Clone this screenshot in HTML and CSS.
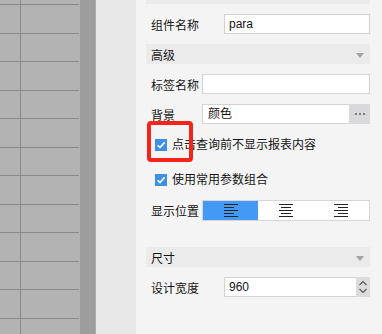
FILE: index.html
```html
<!DOCTYPE html>
<html>
<head>
<meta charset="utf-8">
<link rel="stylesheet" href="styles.css">
</head>
<body>
<div class="app">
  <div class="grid">
    <div class="grow first"><div class="c1"></div><div class="c2"></div></div>
    <div class="grow a"><div class="c1"></div><div class="c2"></div></div>
    <div class="grow b"><div class="c1"></div><div class="c2"></div></div>
    <div class="grow a"><div class="c1"></div><div class="c2"></div></div>
    <div class="grow b"><div class="c1"></div><div class="c2"></div></div>
    <div class="grow a"><div class="c1"></div><div class="c2"></div></div>
    <div class="grow b"><div class="c1"></div><div class="c2"></div></div>
    <div class="grow a"><div class="c1"></div><div class="c2"></div></div>
    <div class="grow b"><div class="c1"></div><div class="c2"></div></div>
    <div class="grow a"><div class="c1"></div><div class="c2"></div></div>
    <div class="grow b"><div class="c1"></div><div class="c2"></div></div>
    <div class="grow a"><div class="c1"></div><div class="c2"></div></div>
    <div class="grow a"><div class="c1"></div><div class="c2"></div></div>
  </div>
  <div class="scroll"></div>
  <div class="strip"></div>
  <div class="panel">
    <div class="bar-top"></div>

    <div class="row">
      <div class="label wide">组件名称</div>
      <div class="input"><span class="val">para</span></div>
    </div>

    <div class="section"><span>高级</span><span class="tri"></span></div>

    <div class="row">
      <div class="label narrow">标签名称</div>
      <div class="input"></div>
    </div>

    <div class="row">
      <div class="label narrow">背景</div>
      <div class="input with-btn"><span class="val cn">颜色</span><span class="dots"><i></i><i></i><i></i></span></div>
    </div>

    <div class="check first-check">
      <svg class="cb" width="12" height="12" viewBox="0 0 12 12"><rect x="0" y="0" width="12" height="12" fill="#3d8fe6"/><path d="M2.6 6.2 L5 8.6 L9.6 3.4" fill="none" stroke="#fff" stroke-width="1.6"/></svg>
      <span>点击查询前不显示报表内容</span>
    </div>

    <div class="check second-check">
      <svg class="cb" width="12" height="12" viewBox="0 0 12 12"><rect x="0" y="0" width="12" height="12" fill="#3d8fe6"/><path d="M2.6 6.2 L5 8.6 L9.6 3.4" fill="none" stroke="#fff" stroke-width="1.6"/></svg>
      <span>使用常用参数组合</span>
    </div>

    <div class="row seg-row">
      <div class="label narrow">显示位置</div>
      <div class="seg">
        <div class="opt active">
          <svg width="14" height="13" viewBox="0 0 14 13"><g fill="#222"><rect x="0" y="0" width="14" height="1"/><rect x="0" y="3" width="10" height="1"/><rect x="0" y="6" width="14" height="1"/><rect x="0" y="9" width="10" height="1"/><rect x="0" y="12" width="14" height="1"/></g></svg>
        </div>
        <div class="opt">
          <svg width="14" height="13" viewBox="0 0 14 13"><g fill="#222"><rect x="0" y="0" width="14" height="1"/><rect x="2" y="3" width="10" height="1"/><rect x="0" y="6" width="14" height="1"/><rect x="2" y="9" width="10" height="1"/><rect x="0" y="12" width="14" height="1"/></g></svg>
        </div>
        <div class="opt">
          <svg width="14" height="13" viewBox="0 0 14 13"><g fill="#222"><rect x="0" y="0" width="14" height="1"/><rect x="4" y="3" width="10" height="1"/><rect x="0" y="6" width="14" height="1"/><rect x="4" y="9" width="10" height="1"/><rect x="0" y="12" width="14" height="1"/></g></svg>
        </div>
      </div>
    </div>

    <div class="section size"><span>尺寸</span><span class="tri"></span></div>

    <div class="row">
      <div class="label wide">设计宽度</div>
      <div class="input with-spin"><span class="val">960</span>
        <span class="spin">
          <svg width="10" height="16" viewBox="0 0 10 16"><path d="M1.5 6 L5 2.5 L8.5 6" fill="none" stroke="#555" stroke-width="1.1"/><path d="M1.5 10 L5 13.5 L8.5 10" fill="none" stroke="#555" stroke-width="1.1"/></svg>
        </span>
      </div>
    </div>
  </div>
</div>
<div class="mark"></div>
</body>
</html>
```

FILE: styles.css
```css
* { box-sizing: border-box; }
html, body { margin: 0; padding: 0; }
body {
  width: 382px;
  height: 334px;
  overflow: hidden;
  position: relative;
  font-family: "Liberation Sans", "Noto Sans CJK SC", sans-serif;
  font-size: 12px;
  color: #141414;
}
.app {
  display: flex;
  height: 334px;
}
.grid {
  width: 80px;
  background: #b3b3b3;
  display: flex;
  flex-direction: column;
  padding-right: 1px;
  overflow: hidden;
}
.grow {
  display: flex;
  border-bottom: 1px solid #8a8a8a;
  flex: none;
}
.grow.first { height: 5px; }
.grow.a { height: 29px; }
.grow.b { height: 28px; }
.c1 { width: 21px; border-right: 1px solid #8a8a8a; }
.c2 { flex: 1; }
.scroll {
  width: 16px;
  background: #9d9d9d;
  border-right: 1px solid #a9a9a9;
}
.strip {
  width: 40px;
  background: #e8e8e8;
}
.panel {
  flex: 1;
  background: #f4f4f5;
  padding: 0 12px 0 10px;
  display: flex;
  flex-direction: column;
}
.bar-top {
  height: 4px;
  background: #ebebeb;
}
.row {
  display: flex;
  align-items: center;
  height: 20px;
  margin-top: 10px;
}
.label { padding-left: 5px; flex: none; }
.label.wide { width: 78px; }
.label.narrow { width: 56px; }
.input {
  flex: 1;
  height: 20px;
  background: #fff;
  border: 1px solid #d3d3d3;
  display: flex;
  align-items: center;
  padding-left: 4px;
  position: relative;
}
.val { line-height: 18px; }
.val.cn { padding-left: 1px; }
.with-btn, .with-spin { padding-right: 0; }
.dots {
  margin-left: auto;
  width: 21px;
  height: 20px;
  margin-top: -1px;
  margin-bottom: -1px;
  margin-right: -1px;
  background: #d9d9dc;
  display: flex;
  align-items: center;
  justify-content: center;
  gap: 2px;
}
.dots i {
  display: block;
  width: 2px;
  height: 2px;
  background: #7d7d7d;
}
.spin {
  width: 14px;
  height: 20px;
  margin: -1px -1px -1px auto;
  background: #dcdcdd;
  display: flex;
  align-items: center;
  justify-content: center;
}
.section {
  margin-top: 10px;
  height: 20px;
  background: #ebebeb;
  display: flex;
  align-items: center;
  padding: 0 6px 0 5px;
}
.section.size { margin-top: 26px; }
.tri {
  margin-left: auto;
  width: 0;
  height: 0;
  border-left: 4px solid transparent;
  border-right: 4px solid transparent;
  border-top: 5px solid #a3a3a3;
  margin-top: 3px;
}
.check {
  display: flex;
  align-items: center;
  height: 12px;
  padding-left: 9px;
  gap: 5px;
}
.check span { line-height: 12px; }
.cb { flex: none; display: block; }
.first-check { margin-top: 15px; }
.second-check { margin-top: 23px; }
.seg-row { margin-top: 14px; height: 21px; }
.seg {
  flex: 1;
  height: 21px;
  display: flex;
  border: 1px solid #d6d6d6;
  background: #fff;
}
.opt {
  flex: 1;
  display: flex;
  align-items: center;
  justify-content: center;
}
.opt.active { background: #4499f5; }
.mark {
  position: absolute;
  left: 147px;
  top: 121px;
  width: 46px;
  height: 41px;
  border: 4px solid #f4241b;
  border-radius: 4px;
}
```
